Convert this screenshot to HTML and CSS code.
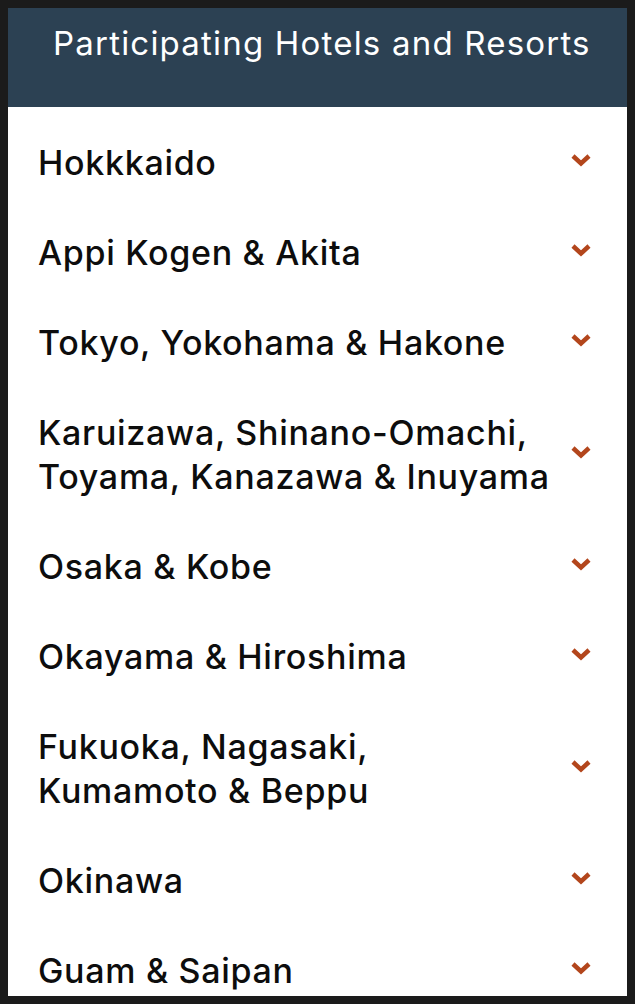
FILE: index.html
```html
<!DOCTYPE html>
<html lang="en">
<head>
  <meta charset="UTF-8" />
  <meta name="viewport" content="width=device-width, initial-scale=1.0"/>
  <title>Participating Hotels and Resorts</title>
  <link rel="stylesheet" href="styles.css">
</head>
<body>

  <div class="hotels-panel">
    <h2 class="panel-title">Participating Hotels and Resorts</h2>

    <!-- Region list -->
    <ul class="region-list">
      <li class="region"><span class="region-name">Hokkkaido</span><svg class="chevron" viewBox="0 0 22 14"><polyline points="3,3 11,10.5 19,3"/></svg></li>
      <li class="region"><span class="region-name">Appi Kogen &amp; Akita</span><svg class="chevron" viewBox="0 0 22 14"><polyline points="3,3 11,10.5 19,3"/></svg></li>
      <li class="region"><span class="region-name">Tokyo, Yokohama &amp; Hakone</span><svg class="chevron" viewBox="0 0 22 14"><polyline points="3,3 11,10.5 19,3"/></svg></li>
      <li class="region"><span class="region-name">Karuizawa, Shinano-Omachi,<br>Toyama, Kanazawa &amp; Inuyama</span><svg class="chevron" viewBox="0 0 22 14"><polyline points="3,3 11,10.5 19,3"/></svg></li>
      <li class="region"><span class="region-name">Osaka &amp; Kobe</span><svg class="chevron" viewBox="0 0 22 14"><polyline points="3,3 11,10.5 19,3"/></svg></li>
      <li class="region"><span class="region-name">Okayama &amp; Hiroshima</span><svg class="chevron" viewBox="0 0 22 14"><polyline points="3,3 11,10.5 19,3"/></svg></li>
      <li class="region"><span class="region-name">Fukuoka, Nagasaki,<br>Kumamoto &amp; Beppu</span><svg class="chevron" viewBox="0 0 22 14"><polyline points="3,3 11,10.5 19,3"/></svg></li>
      <li class="region"><span class="region-name">Okinawa</span><svg class="chevron" viewBox="0 0 22 14"><polyline points="3,3 11,10.5 19,3"/></svg></li>
      <li class="region"><span class="region-name">Guam &amp; Saipan</span><svg class="chevron" viewBox="0 0 22 14"><polyline points="3,3 11,10.5 19,3"/></svg></li>
    </ul>
  </div>

</body>
</html>
```

FILE: styles.css
```css
html {
  background-color: #1b1b1b;
}

body {
  font-family: Inter, "Noto Sans", sans-serif;
  margin: 8px;
  height: 988px;
  overflow: hidden;
}

.hotels-panel {
  background: white;
  height: 100%;
  overflow: hidden;
}

.panel-title {
  margin: 0;
  background-color: #2c4153;
  color: white;
  font-size: 33px;
  font-weight: 400;
  letter-spacing: 1.2px;
  line-height: 44px;
  padding: 13px 20px 42px 45px;
}

.region-list {
  list-style: none;
  margin: 0;
  padding: 11px 0 0 0;
}

.region {
  display: flex;
  justify-content: space-between;
  align-items: center;
  padding: 23px 35px 23px 30px;
  color: #0d0d0d;
  font-size: 34px;
  font-weight: 500;
  letter-spacing: 0.7px;
  line-height: 44px;
}

.chevron {
  width: 22px;
  height: 14px;
  margin-bottom: 7px;
  flex-shrink: 0;
}

.chevron polyline {
  fill: none;
  stroke: #b3461c;
  stroke-width: 4.5;
}
```
